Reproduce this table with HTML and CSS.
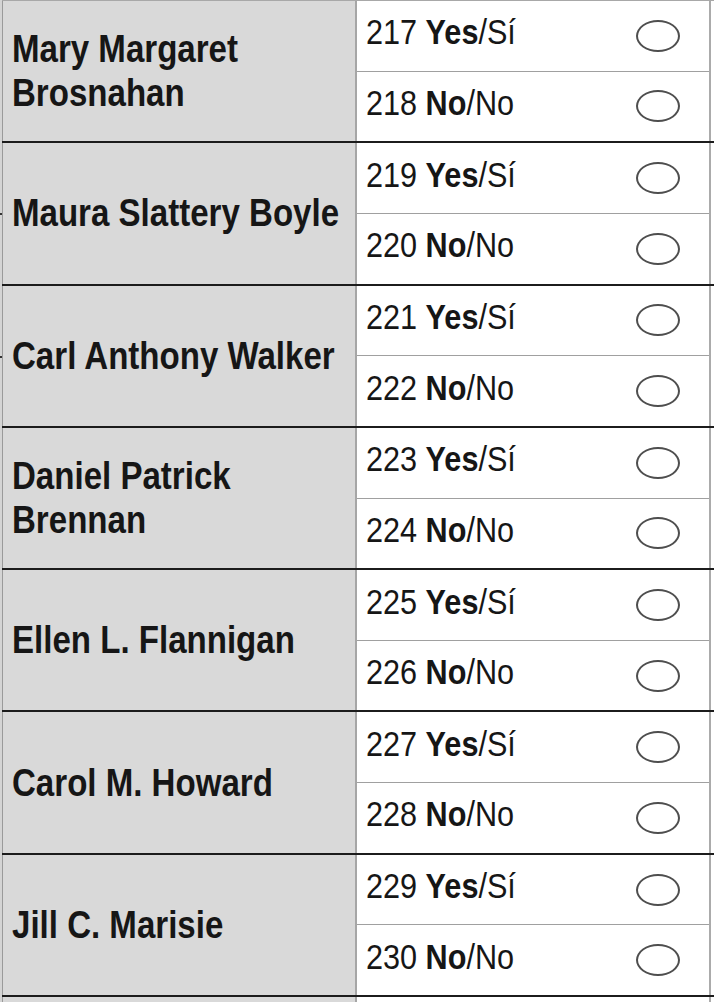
FILE: index.html
```html
<!DOCTYPE html>
<html lang="en">
<head>
<meta charset="utf-8">
<title>Ballot</title>
<link rel="stylesheet" href="styles.css">
</head>
<body>
<div class="ballot">
  <div class="contest">
    <div class="name"><span class="nm">Mary Margaret<br>Brosnahan</span></div>
    <div class="options">
      <div class="opt"><span class="txt">217 <b>Yes</b>/Sí</span><span class="bubble"></span></div>
      <div class="opt"><span class="txt">218 <b>No</b>/No</span><span class="bubble"></span></div>
    </div>
  </div>
  <div class="contest tick">
    <div class="name"><span class="nm">Maura Slattery Boyle</span></div>
    <div class="options">
      <div class="opt"><span class="txt">219 <b>Yes</b>/Sí</span><span class="bubble"></span></div>
      <div class="opt"><span class="txt">220 <b>No</b>/No</span><span class="bubble"></span></div>
    </div>
  </div>
  <div class="contest tick">
    <div class="name"><span class="nm">Carl Anthony Walker</span></div>
    <div class="options">
      <div class="opt"><span class="txt">221 <b>Yes</b>/Sí</span><span class="bubble"></span></div>
      <div class="opt"><span class="txt">222 <b>No</b>/No</span><span class="bubble"></span></div>
    </div>
  </div>
  <div class="contest">
    <div class="name"><span class="nm">Daniel Patrick<br>Brennan</span></div>
    <div class="options">
      <div class="opt"><span class="txt">223 <b>Yes</b>/Sí</span><span class="bubble"></span></div>
      <div class="opt"><span class="txt">224 <b>No</b>/No</span><span class="bubble"></span></div>
    </div>
  </div>
  <div class="contest">
    <div class="name"><span class="nm">Ellen L. Flannigan</span></div>
    <div class="options">
      <div class="opt"><span class="txt">225 <b>Yes</b>/Sí</span><span class="bubble"></span></div>
      <div class="opt"><span class="txt">226 <b>No</b>/No</span><span class="bubble"></span></div>
    </div>
  </div>
  <div class="contest">
    <div class="name"><span class="nm">Carol M. Howard</span></div>
    <div class="options">
      <div class="opt"><span class="txt">227 <b>Yes</b>/Sí</span><span class="bubble"></span></div>
      <div class="opt"><span class="txt">228 <b>No</b>/No</span><span class="bubble"></span></div>
    </div>
  </div>
  <div class="contest">
    <div class="name"><span class="nm">Jill C. Marisie</span></div>
    <div class="options">
      <div class="opt"><span class="txt">229 <b>Yes</b>/Sí</span><span class="bubble"></span></div>
      <div class="opt"><span class="txt">230 <b>No</b>/No</span><span class="bubble"></span></div>
    </div>
  </div>
  <div class="contest">
    <div class="name"></div>
    <div class="options">
      <div class="opt"></div>
      <div class="opt"></div>
    </div>
  </div>
</div>
</body>
</html>
```

FILE: styles.css
```css
html, body {
  margin: 0;
  padding: 0;
  background: #ffffff;
}

html {
  height: 1002px;
  overflow: hidden;
}

body {
  height: 1002px;
  overflow: hidden;
  font-family: "Liberation Sans", Arial, sans-serif;
  color: #161616;
}

.ballot {
  margin-left: 2px;
  width: 712px;
  border-top: 1px solid #a8a8a8;
  box-shadow: -2px 0 0 #d4d4d4;
}

.contest {
  position: relative;
  display: flex;
  height: 142.3px;
  box-sizing: border-box;
  border-bottom: 2px solid #1c1c1c;
}

.contest.tick::before {
  content: "";
  position: absolute;
  left: -2px;
  top: 70px;
  width: 2px;
  height: 2px;
  background: #333;
}

.name {
  flex: none;
  display: flex;
  align-items: center;
  padding-left: 9px;
  box-sizing: border-box;
  width: 355px;
  background: #d9d9d9;
  border-left: 1px solid #9a9a9a;
  border-right: 2px solid #a6a6a6;
}

.nm {
  display: inline-block;
  white-space: nowrap;
  font-weight: bold;
  font-size: 38px;
  line-height: 44px;
  transform: scaleX(0.87);
  transform-origin: left center;
}

.options {
  width: 354px;
  flex: none;
  display: flex;
  flex-direction: column;
  border-right: 2px solid #ababab;
  box-sizing: border-box;
}

.opt {
  flex: 1;
  display: flex;
  align-items: center;
  justify-content: space-between;
  padding-left: 9px;
  padding-right: 29px;
}

.opt:first-child {
  border-bottom: 1px solid #a0a0a0;
}

.txt {
  display: inline-block;
  white-space: nowrap;
  font-size: 35px;
  line-height: 40px;
  margin-top: -7px;
  transform: scaleX(0.875);
  transform-origin: left center;
}

.txt b {
  font-weight: bold;
}

.bubble {
  width: 44px;
  height: 32px;
  box-sizing: border-box;
  border: 2px solid #4e4e4e;
  border-radius: 50%;
}
```
